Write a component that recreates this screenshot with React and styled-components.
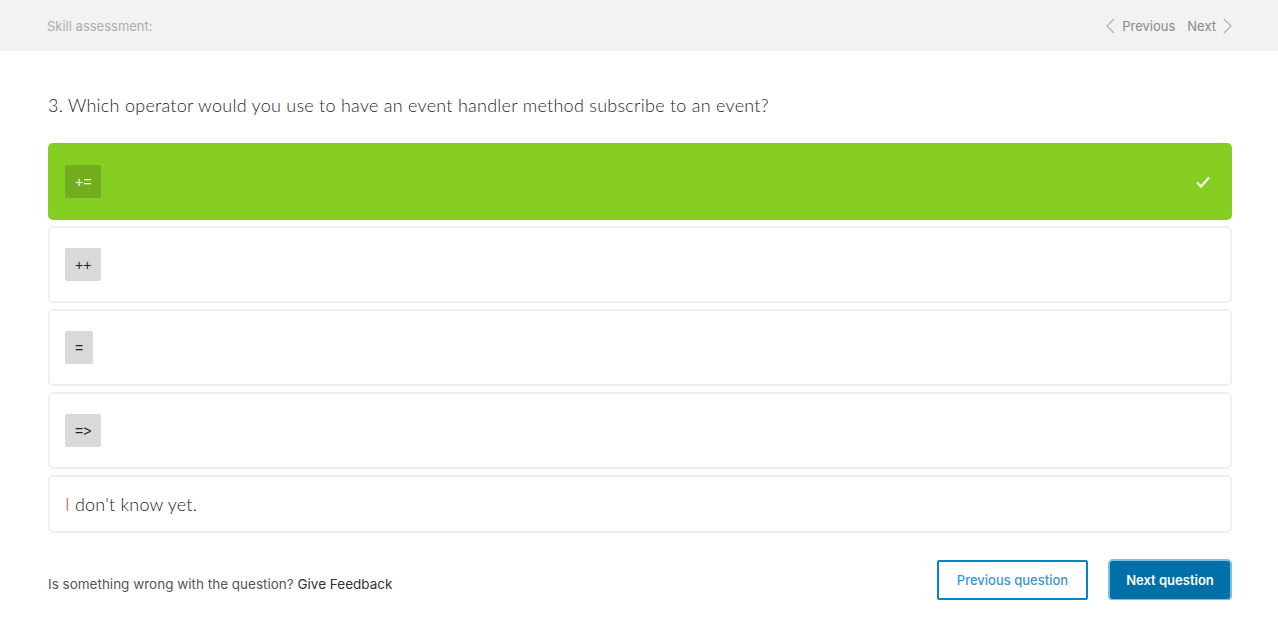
import React from "react";
import styled, { createGlobalStyle } from "styled-components";

const GlobalStyle = createGlobalStyle`
  body {
    margin: 0;
    background: #fff;
    font-family: Inter, "Noto Sans", sans-serif;
  }
`;

const options = [
  { code: "+=", selected: true },
  { code: "++" },
  { code: "=" },
  { code: "=>" },
];

const Chevron = ({ dir }) => (
  <svg width="9" height="16" viewBox="0 0 9 16" fill="none">
    <path
      d={dir === "left" ? "M8 1L1 8l7 7" : "M1 1l7 7-7 7"}
      stroke="#b0b0b0"
      strokeWidth="1.2"
    />
  </svg>
);

const Check = () => (
  <svg width="14" height="12" viewBox="0 0 14 12" fill="none">
    <path d="M1 6.5l4 4L13 1.5" stroke="#fff" strokeWidth="2" />
  </svg>
);

const App = () => {
  return (
    <>
      <GlobalStyle />
      <Header>
        <Title>Skill assessment:</Title>
        <Pager>
          <PagerLink>
            <Chevron dir="left" />
            Previous
          </PagerLink>
          <PagerLink>
            Next
            <Chevron dir="right" />
          </PagerLink>
        </Pager>
      </Header>
      <Main>
        <Question>
          3. Which operator would you use to have an event handler method
          subscribe to an event?
        </Question>
        <Options>
          {options.map((o) => (
            <Option key={o.code} selected={o.selected}>
              <Code selected={o.selected}>{o.code}</Code>
              {o.selected && <Check />}
            </Option>
          ))}
          <Option small>
            <Unknown>
              <span>I</span> don't know yet.
            </Unknown>
          </Option>
        </Options>
        <Footer>
          <Feedback>
            Is something wrong with the question? <b>Give Feedback</b>
          </Feedback>
          <Buttons>
            <OutlineButton>Previous question</OutlineButton>
            <PrimaryButton>Next question</PrimaryButton>
          </Buttons>
        </Footer>
      </Main>
    </>
  );
};

const Header = styled.header`
  height: 51px;
  background: #f2f2f2;
  display: flex;
  align-items: center;
  justify-content: space-between;
  padding: 0 46px 0 47px;
`;

const Title = styled.div`
  font-size: 13px;
  color: #adadad;
`;

const Pager = styled.div`
  display: flex;
  align-items: center;
  gap: 12px;
`;

const PagerLink = styled.a`
  display: flex;
  align-items: center;
  gap: 7px;
  font-size: 13px;
  color: #8a8a8a;
  cursor: pointer;
`;

const Main = styled.main`
  padding: 0 46px 0 48px;
`;

const Question = styled.h2`
  margin: 43px 0 27px;
  font-family: Lato, sans-serif;
  font-weight: 300;
  font-size: 18px;
  line-height: 22px;
  letter-spacing: 0.26px;
  color: #1f1f1f;
`;

const Options = styled.div`
  display: flex;
  flex-direction: column;
  gap: 6px;
`;

const Option = styled.div`
  height: ${(p) => (p.small ? "58px" : "77px")};
  flex-shrink: 0;
  box-sizing: border-box;
  border-radius: 5px;
  border: 2px solid ${(p) => (p.selected ? "#87ce22" : "#efefef")};
  background: ${(p) => (p.selected ? "#87ce22" : "#fff")};
  display: flex;
  align-items: center;
  justify-content: space-between;
  padding: 0 20px 0 15px;
`;

const Code = styled.span`
  min-width: 28px;
  height: 33px;
  padding: 0 10px;
  box-sizing: border-box;
  display: inline-flex;
  align-items: center;
  justify-content: center;
  border-radius: 2px;
  font-family: "Liberation Sans", sans-serif;
  font-size: 14px;
  color: ${(p) => (p.selected ? "#fff" : "#222")};
  background: ${(p) => (p.selected ? "#72ad1e" : "#d9d9d9")};
`;

const Unknown = styled.div`
  font-family: Lato, sans-serif;
  font-weight: 300;
  font-size: 18px;
  letter-spacing: 0.2px;
  color: #222;

  span {
    color: #d0473e;
  }
`;

const Footer = styled.div`
  display: flex;
  align-items: center;
  justify-content: space-between;
  margin-top: 27px;
`;

const Feedback = styled.div`
  font-size: 13.5px;
  color: #555;
  padding-top: 8px;

  b {
    font-weight: 400;
    color: #333;
  }
`;

const Buttons = styled.div`
  display: flex;
  align-items: center;
  gap: 22px;
`;

const OutlineButton = styled.button`
  height: 40px;
  width: 151px;
  border: 2px solid #0087c8;
  background: #fff;
  color: #3a95d4;
  font-family: Inter, sans-serif;
  font-size: 13px;
  font-weight: 500;
  border-radius: 2px;
  cursor: pointer;
`;

const PrimaryButton = styled.button`
  height: 38px;
  width: 120px;
  margin-right: 2px;
  border: none;
  background: #0070a8;
  color: #fff;
  font-family: Inter, sans-serif;
  font-size: 13px;
  font-weight: 600;
  border-radius: 3px;
  box-shadow: 0 0 0 2px #7ebfe0;
  cursor: pointer;
`;

export default App;
